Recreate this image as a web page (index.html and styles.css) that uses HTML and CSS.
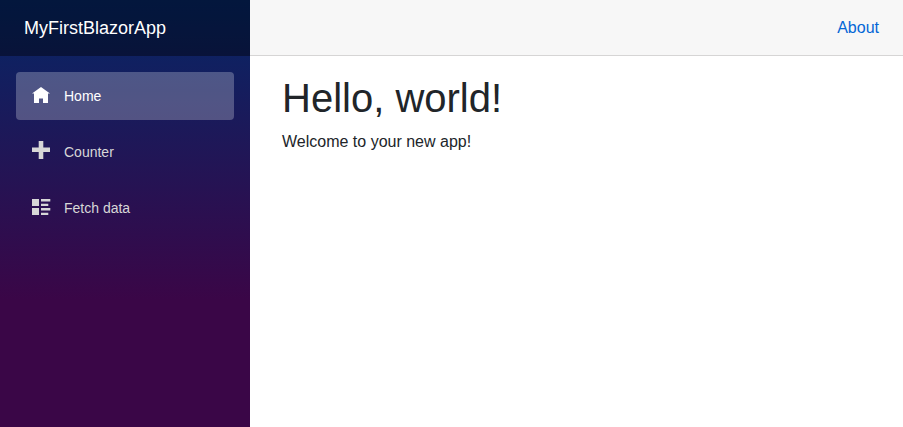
FILE: index.html
```html
<!DOCTYPE html>
<html lang="en">
<head>
<meta charset="utf-8">
<meta name="viewport" content="width=device-width, initial-scale=1">
<title>MyFirstBlazorApp</title>
<link rel="stylesheet" href="styles.css">
</head>
<body>
<div class="page">
  <div class="sidebar">
    <div class="brand-row"><a class="brand" href="#">MyFirstBlazorApp</a></div>
    <nav class="nav" aria-label="Main">
      <a class="nav-link active" href="#" aria-current="page">
        <svg class="icon" viewBox="0 -2 18 22" aria-hidden="true"><path d="M9 0L0 6.500H2V16H7V11.500H11V16H16V6.500H18z"/></svg>Home</a>
      <a class="nav-link" href="#">
        <svg class="icon" viewBox="0 -2 18 22" aria-hidden="true"><path d="M6.700-2V4.600H0V9H6.700V16H11.300V9H18V4.600H11.300V-2z"/></svg>Counter</a>
      <a class="nav-link" href="#">
        <svg class="icon" viewBox="0 -2 18 22" aria-hidden="true"><path d="M0 0H7V7H0zM9 0H18.300V2.500H9zM9 4.700H16.300V7H9zM0 9H7V16H0zM9 9H18.300V11.500H9zM9 13.800H16.300V16H9z"/></svg>Fetch data</a>
    </nav>
  </div>
  <main class="main">
    <header class="top-row"><a href="#">About</a></header>
    <article class="content">
      <h1>Hello, world!</h1>
      <p>Welcome to your new app!</p>
    </article>
  </main>
</div>
</body>
</html>
```

FILE: styles.css
```css
* { box-sizing: border-box; }
body {
  margin: 0;
  background: #fff;
  color: #212529;
  font: 16px/24px "Liberation Sans", Arial, sans-serif;
}
a { color: #0366d6; text-decoration: none; }
.page { display: flex; min-height: 100vh; }
.sidebar {
  flex: 0 0 250px;
  background: linear-gradient(180deg, #052767 0%, #3a0647 70%);
}
.brand-row {
  display: flex;
  align-items: center;
  height: 56px;
  padding: 0 24px;
  background: rgba(0, 0, 0, 0.4);
}
.brand { color: #fff; font-size: 18px; }
.nav {
  display: flex;
  flex-direction: column;
  gap: 8px;
  padding: 16px;
}
.nav-link {
  display: flex;
  align-items: center;
  height: 48px;
  padding: 0 16px;
  border-radius: 4px;
  color: #d7d7d7;
  font-size: 14px;
}
.nav-link.active { background: rgba(255, 255, 255, 0.25); color: #fff; }
.icon {
  width: 18px;
  height: 22px;
  margin-right: 14px;
  fill: currentColor;
  overflow: visible;
}
.main { flex: 1; min-width: 0; }
.top-row {
  display: flex;
  align-items: center;
  justify-content: flex-end;
  height: 56px;
  padding: 0 24px;
  background: #f7f7f7;
  border-bottom: 1px solid #d6d5d5;
}
.content { padding: 18px 32px; }
h1 { margin: 0 0 8px; font-size: 40px; line-height: 48px; font-weight: 400; }
p { margin: 0; }
```
